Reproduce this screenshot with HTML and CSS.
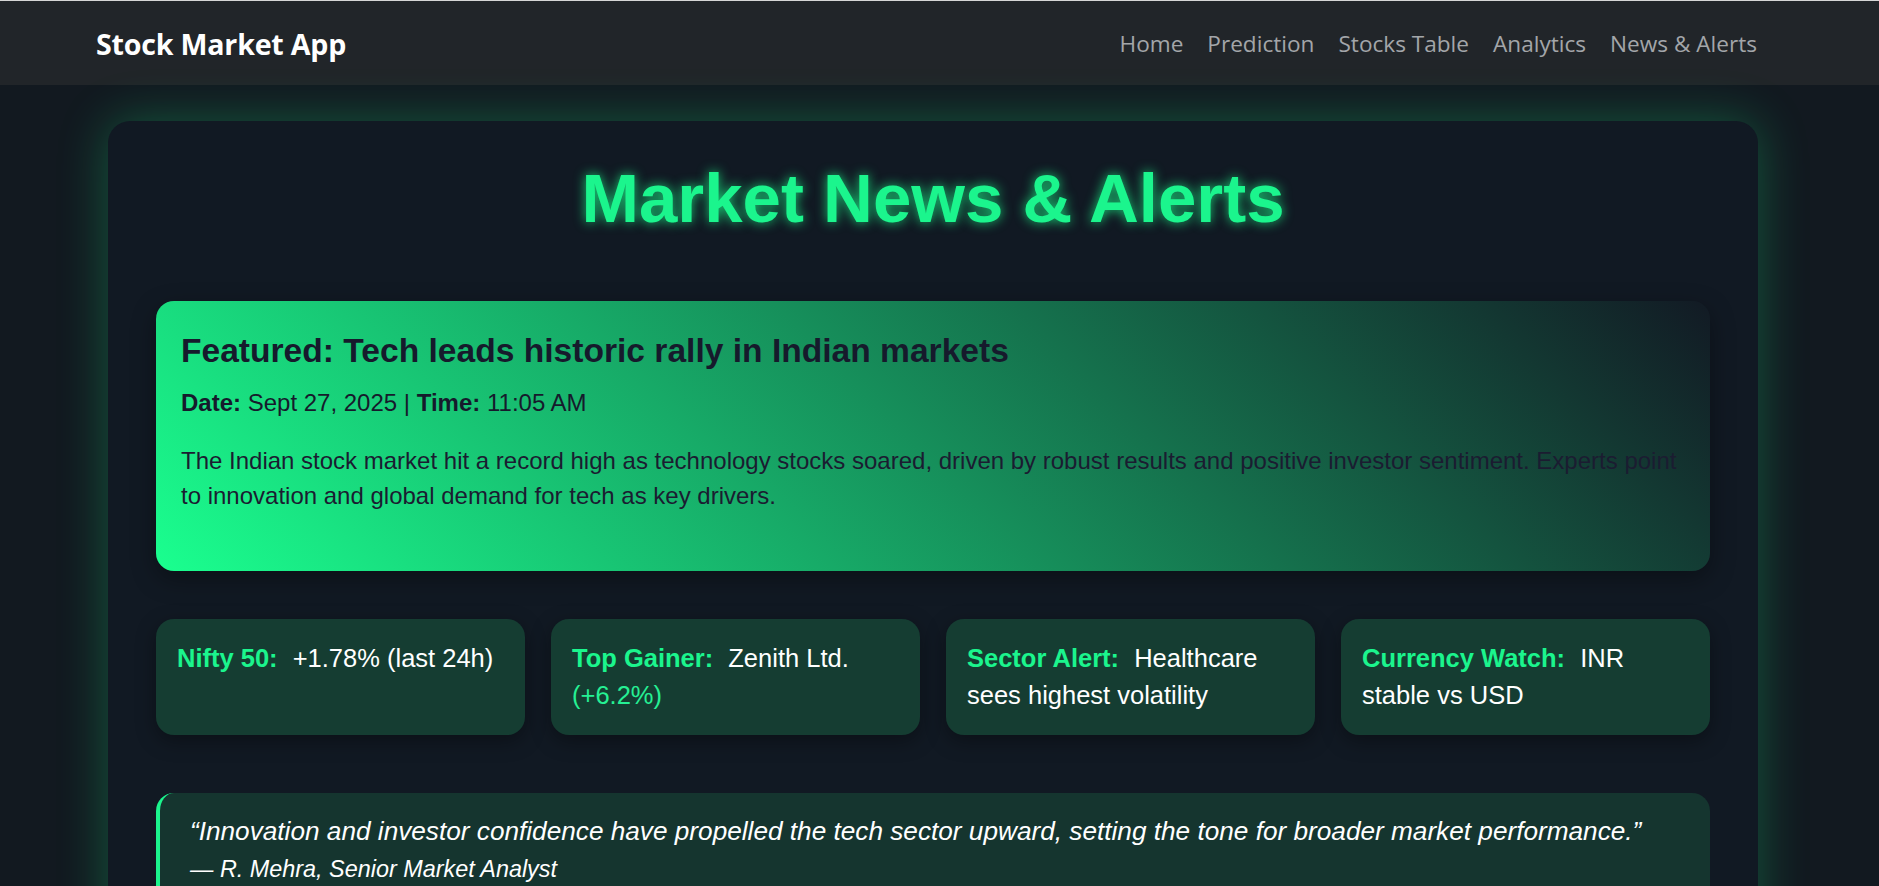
FILE: index.html
```html
<!DOCTYPE html>
<html lang="en">
<head>
<meta charset="utf-8">
<title>Market News &amp; Alerts</title>
<link rel="stylesheet" href="styles.css">
</head>
<body>
<nav class="navbar">
  <a class="brand" href="#">Stock Market App</a>
  <ul class="nav-links">
    <li><a href="#">Home</a></li>
    <li><a href="#">Prediction</a></li>
    <li><a href="#">Stocks Table</a></li>
    <li><a href="#">Analytics</a></li>
    <li><a href="#">News &amp; Alerts</a></li>
  </ul>
</nav>
<main class="wrap">
  <section class="panel">
    <h1 class="title">Market News &amp; Alerts</h1>
    <article class="featured">
      <h2>Featured: Tech leads historic rally in Indian markets</h2>
      <p class="meta"><strong>Date:</strong> Sept 27, 2025 | <strong>Time:</strong> 11:05 AM</p>
      <p class="lead">The Indian stock market hit a record high as technology stocks soared, driven by robust results and positive investor sentiment. Experts point to innovation and global demand for tech as key drivers.</p>
    </article>
    <div class="stats">
      <div class="stat"><span class="label">Nifty 50:</span> +1.78% (last 24h)</div>
      <div class="stat"><span class="label">Top Gainer:</span> Zenith Ltd. <span class="up">(+6.2%)</span></div>
      <div class="stat"><span class="label">Sector Alert:</span> Healthcare sees highest volatility</div>
      <div class="stat"><span class="label">Currency Watch:</span> INR stable vs USD</div>
    </div>
    <blockquote class="quote">
      <p>“Innovation and investor confidence have propelled the tech sector upward, setting the tone for broader market performance.”</p>
      <footer>— R. Mehra, Senior Market Analyst</footer>
    </blockquote>
  </section>
</main>
</body>
</html>
```

FILE: styles.css
```css
* { box-sizing: border-box; }

html, body {
  margin: 0;
  padding: 0;
}

body {
  background: #121920;
  font-family: "Liberation Sans", Arial, sans-serif;
  color: #ffffff;
}

.navbar {
  height: 85px;
  border-top: 1px solid #d6d6d6;
  background: #212529;
  display: flex;
  align-items: center;
  justify-content: space-between;
  padding: 0 110px 0 96px;
}

.brand {
  font-family: "Open Sans", "Noto Sans", sans-serif;
  font-weight: 700;
  font-size: 28.6px;
  color: #ffffff;
  text-decoration: none;
  letter-spacing: -0.2px;
}

.nav-links {
  display: flex;
  list-style: none;
  margin: 0;
  padding: 0;
}

.nav-links a {
  display: block;
  padding: 0 12px;
  font-family: "Open Sans", "Noto Sans", sans-serif;
  font-size: 22.6px;
  color: #a3a6a9;
  text-decoration: none;
}

.wrap {
  padding: 36px 121px 60px 108px;
}

.panel {
  background: #111923;
  border-radius: 22px;
  padding: 36px 48px 40px;
  box-shadow: 0 0 50px rgba(26, 255, 140, 0.28);
}

.title {
  margin: 0 0 61px;
  text-align: center;
  font-size: 69px;
  line-height: 83px;
  font-weight: 700;
  color: #1bf58d;
  text-shadow: 0 0 12px rgba(26, 255, 140, 0.8);
}

.featured {
  border-radius: 18px;
  padding: 30px 25px 57px;
  background: linear-gradient(45deg, #1aff8f 0%, #121a24 100%);
  box-shadow: 0 8px 24px rgba(0, 0, 0, 0.35);
  color: #161a2c;
}

.featured h2 {
  margin: 0;
  font-size: 33.6px;
  line-height: 40px;
  font-weight: 700;
}

.meta {
  margin: 14px 0 0;
  font-size: 24px;
  line-height: 36px;
}

.lead {
  margin: 23px 0 0;
  font-size: 24px;
  line-height: 34.8px;
  color: #1b1c31;
}

.stats {
  margin-top: 48px;
  display: grid;
  grid-template-columns: repeat(4, 1fr);
  gap: 26px;
}

.stat {
  background: #153d32;
  border-radius: 18px;
  padding: 21px 21px;
  font-size: 25.5px;
  line-height: 37px;
  color: #ffffff;
  box-shadow: 0 6px 20px rgba(0, 0, 0, 0.35);
}

.label {
  font-weight: 700;
  color: #1bf58d;
  margin-right: 8px;
}

.up {
  color: #25f094;
}

.quote {
  margin: 58px 0 0;
  background: #15352f;
  border-left: 4px solid #1bf58d;
  border-radius: 18px;
  padding: 19px 30px 24px;
  font-style: italic;
  line-height: 38px;
  color: #ffffff;
}

.quote p {
  margin: 0;
  font-size: 26.2px;
}

.quote footer {
  font-size: 23.4px;
}
```
